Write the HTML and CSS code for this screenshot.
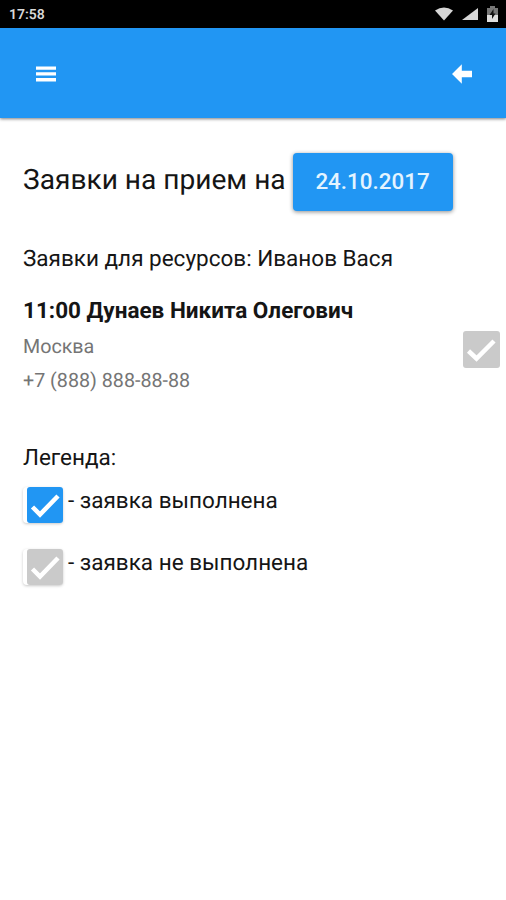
FILE: index.html
```html
<!DOCTYPE html>
<html lang="ru">
<head>
<meta charset="utf-8">
<title>Заявки на прием</title>
<link rel="stylesheet" href="styles.css">
</head>
<body>
<div class="status">
  <span class="clock">17:58</span>
  <div class="status-icons">
    <svg width="18" height="14" viewBox="0 0 18 14"><path d="M0 3.5Q9-2.5 18 3.5L9 13.5Z" fill="#d6d6d6"/></svg>
    <svg width="16" height="14" viewBox="0 0 16 14"><path d="M16 1V13H0Z" fill="#d6d6d6"/></svg>
    <svg width="11" height="16" viewBox="0 0 11 16"><path d="M0 2H3V0H8V2H11V9H0Z" fill="#777"/><path d="M0 9H11V16H0Z" fill="#dedede"/><path d="M6.5 3L2.5 9H5V13L8.5 7.5H6.5Z" fill="#111"/></svg>
  </div>
</div>
<header class="bar">
  <svg width="20" height="16" viewBox="0 0 20 16"><path d="M0 .5H20V3.8H0ZM0 6.3H20V9.6H0ZM0 12.1H20V15.4H0Z" fill="#fff"/></svg>
  <svg width="20" height="20" viewBox="0 0 20 20"><path d="M0 10L9.8 .3V6.8H20V13.2H9.8V19.7Z" fill="#fff"/></svg>
</header>
<main>
  <div class="heading">
    <h1>Заявки на прием на</h1>
    <button class="date">24.10.2017</button>
  </div>
  <p class="resource">Заявки для ресурсов: Иванов Вася</p>
  <section class="request">
    <div class="info">
      <h2>11:00 Дунаев Никита Олегович</h2>
      <p class="city">Москва</p>
      <p class="phone">+7 (888) 888-88-88</p>
    </div>
    <svg class="check row-check" viewBox="0 0 37 37"><path d="M5.5 20L13.5 27.5L31 10"/></svg>
  </section>
  <section class="legend">
    <p class="legend-title">Легенда:</p>
    <div class="item">
      <div class="mark"><svg class="check done" viewBox="0 0 36 36"><path d="M5.5 20L13 27.5L31 9"/></svg></div>
      <span>- заявка выполнена</span>
    </div>
    <div class="item">
      <div class="mark"><svg class="check" viewBox="0 0 36 36"><path d="M5.5 20L13 27.5L31 9"/></svg></div>
      <span>- заявка не выполнена</span>
    </div>
  </section>
</main>
</body>
</html>
```
FILE: styles.css
```css
* { box-sizing: border-box; }
body { margin: 0; height: 900px; overflow: hidden; background: #fff; color: #151515; font-family: Roboto, sans-serif; text-rendering: geometricPrecision; }
h1, h2, p { margin: 0; white-space: nowrap; }
svg { display: block; flex: none; }
.status { height: 28px; padding: 0 8px 0 9px; background: #000; display: flex; align-items: center; justify-content: space-between; }
.clock { color: #d8d8d8; font-size: 14px; font-weight: 600; line-height: 28px; padding-top: 1px; }
.status-icons { display: flex; align-items: center; gap: 9px; }
.bar { height: 90px; padding: 2px 34px 0 36px; background: #2196f3; display: flex; align-items: center; justify-content: space-between; box-shadow: 0 1px 3px rgba(0,0,0,.5); }
main { padding: 35px 6px 0 23px; }
.heading { display: flex; align-items: flex-start; height: 58px; }
h1 { width: 270px; font-size: 28.1px; font-weight: 400; line-height: 54px; }
.date { width: 160px; height: 58px; border: 0; padding: 0 1px 2px 0; border-radius: 4px; background: #2196f3; color: #e4f4ff; font: 500 22.4px/56px Roboto, sans-serif; box-shadow: 0 1px 4px rgba(0,0,0,.45); }
.resource { margin-top: 33px; font-size: 22.5px; line-height: 30px; }
.request { display: flex; justify-content: space-between; margin-top: 22px; height: 98px; }
h2 { font-size: 22.5px; font-weight: 700; line-height: 30px; }
.city, .phone { color: #757575; font-size: 19.7px; line-height: 34px; }
.city { margin-top: 4px; }
.check { width: 36px; height: 36px; border-radius: 3px; background: #cacaca; fill: none; stroke: #fff; stroke-width: 4.5; }
.row-check { width: 37px; height: 37px; margin-top: 35px; }
.legend { margin-top: 49px; }
.legend-title { font-size: 22.5px; line-height: 30px; }
.item { display: flex; height: 36px; margin-top: 14px; font-size: 22.5px; line-height: 28px; white-space: nowrap; }
.item + .item { margin-top: 26px; }
.mark { width: 40px; height: 36px; padding-left: 4px; margin-right: 5px; flex: none; border-radius: 4px; background: #fff; box-shadow: 0 1px 3px rgba(0,0,0,.22); }
.done { background: #2196f3; }
```
